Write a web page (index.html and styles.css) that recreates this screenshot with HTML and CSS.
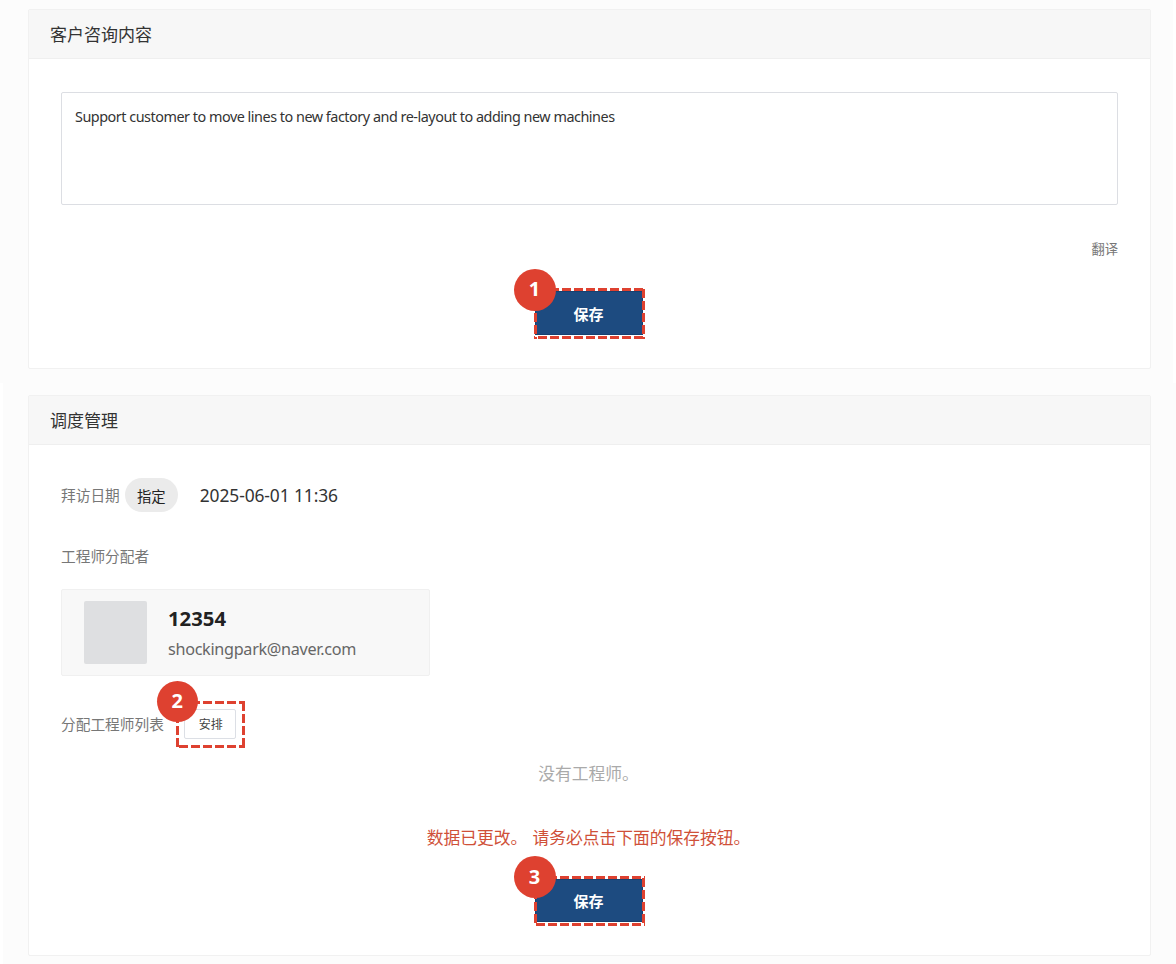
FILE: index.html
```html
<!DOCTYPE html>
<html lang="zh-CN">
<head>
<meta charset="utf-8">
<title>调度管理</title>
<link rel="stylesheet" href="styles.css">
</head>
<body>
<section class="band band-top">
  <article class="card card-inquiry">
    <h2 class="card-title">客户咨询内容</h2>
    <div class="card-body">
      <div class="inquiry-box"><span class="inquiry-text">Support customer to move lines to new factory and re-layout to adding new machines</span></div>
      <a class="translate">翻译</a>
      <div class="save-wrap">
        <button class="save">保存</button>
        <svg class="dash" width="111" height="51"><path d="M0 1.5H111M0 49.5H111" stroke-dashoffset="-4"/><path d="M1.5 0V51M109.5 0V51" stroke-dashoffset="-1"/></svg>
        <span class="step">1</span>
      </div>
    </div>
  </article>
</section>
<section class="band band-bottom">
  <article class="card card-dispatch">
    <h2 class="card-title">调度管理</h2>
    <div class="card-body">
      <div class="visit-row">
        <span class="label">拜访日期</span>
        <button class="pill">指定</button>
        <span class="date">2025-06-01 11:36</span>
      </div>
      <div class="label assigner-label">工程师分配者</div>
      <div class="person">
        <div class="avatar"></div>
        <div class="person-info">
          <strong class="person-name">12354</strong>
          <span class="person-mail">shockingpark@naver.com</span>
        </div>
      </div>
      <div class="assign-row">
        <span class="label">分配工程师列表</span>
        <div class="assign-wrap">
          <button class="assign">安排</button>
          <svg class="dash dash-small" width="69" height="47"><path d="M0 1.5H69M0 45.5H69" stroke-dashoffset="-3"/><path d="M1.5 0V47M67.5 0V47" stroke-dashoffset="-1"/></svg>
          <span class="step step-small">2</span>
        </div>
      </div>
      <p class="empty">没有工程师。</p>
      <p class="warning">数据已更改。<span class="warning-next">请务必点击下面的保存按钮。</span></p>
      <div class="save-wrap save-final">
        <button class="save">保存</button>
        <svg class="dash" width="111" height="50"><path d="M0 1.5H111M0 48.5H111" stroke-dashoffset="-2"/><path d="M1.5 0V50M109.5 0V50" stroke-dashoffset="-2"/></svg>
        <span class="step">3</span>
      </div>
    </div>
  </article>
</section>
</body>
</html>
```
FILE: styles.css
```css
* { box-sizing: border-box; }

body {
  margin: 0;
  width: 1176px;
  height: 964px;
  overflow: hidden;
  background: #fff;
  color: #333;
  font-family: "Noto Sans", "Noto Sans CJK SC", sans-serif;
}

button { padding: 0; font-family: inherit; }

.band { background: #fcfcfc; }
.band-top { width: 1173px; height: 383px; padding: 9px 0 0 28px; }
.band-bottom { width: 1173px; height: 581px; margin-left: 3px; padding: 12px 0 0 25px; }

.card { width: 1123px; border: 1px solid #f1f1f1; border-radius: 2px; background: #fff; }
.card-inquiry { height: 360px; }
.card-dispatch { height: 561px; }

.card-title {
  height: 49px;
  margin: 0;
  padding-left: 21px;
  border-bottom: 1px solid #efefef;
  background: #f7f7f7;
  font-size: 17px;
  font-weight: 400;
  line-height: 49px;
}

.card-body { display: flex; flex-direction: column; padding: 33px 32px 0; }

.inquiry-box {
  height: 113px;
  padding: 10px 13px;
  border: 1px solid #dcdee3;
  border-radius: 2px;
  font-size: 14.4px;
  line-height: 28px;
  white-space: nowrap;
}
.inquiry-text { letter-spacing: -0.48px; }

.translate {
  align-self: flex-end;
  margin-top: 33px;
  color: #777;
  font-size: 13.3px;
  line-height: 22px;
}

.save-wrap { position: relative; align-self: center; margin: 31px 2px 0 0; width: 108px; height: 44px; }
.save {
  display: block;
  width: 108px;
  height: 44px;
  border: 1px solid #17406f;
  background: #1d4b80;
  color: #fff;
  font-size: 15px;
  font-weight: 700;
}

.dash { position: absolute; left: -1px; top: -3px; fill: none; stroke: #de4130; stroke-width: 3; stroke-dasharray: 9 3; }

.step {
  position: absolute;
  left: -21px;
  top: -22px;
  width: 42px;
  height: 42px;
  border-radius: 50%;
  background: #de4130;
  color: #fff;
  font-size: 20px;
  font-weight: 700;
  line-height: 40px;
  text-align: center;
}

.label { color: #777; font-size: 14.7px; line-height: 22px; white-space: nowrap; }

.visit-row { display: flex; align-items: center; height: 34px; }
.pill {
  width: 53px;
  height: 34px;
  margin: 0 22px 0 5px;
  border: 0;
  border-radius: 17px;
  background: #ebebeb;
  color: #222;
  font-size: 14.3px;
  font-weight: 400;
}
.date { font-size: 17.4px; letter-spacing: -0.1px; line-height: 34px; }

.assigner-label { margin-top: 33px; }

.person {
  display: flex;
  width: 369px;
  height: 87px;
  margin-top: 22px;
  padding: 11px 22px;
  gap: 21px;
  border: 1px solid #f0f0f0;
  border-radius: 2px;
  background: #f8f8f8;
}
.avatar { width: 63px; height: 63px; border-radius: 2px; background: #dedfe1; }
.person-info { display: flex; flex-direction: column; padding-top: 1px; }
.person-name { color: #222; font-size: 20.3px; line-height: 32px; }
.person-mail { color: #666; font-size: 16.2px; letter-spacing: -0.3px; line-height: 30px; }

.assign-row { display: flex; align-items: center; height: 30px; margin-top: 33px; }
.assign-wrap { position: relative; margin-left: 20px; }
.assign {
  display: block;
  width: 52px;
  height: 30px;
  padding-left: 2px;
  border: 1px solid #dcdfe5;
  border-radius: 2px;
  background: #fff;
  color: #444;
  font-size: 12px;
  font-weight: 400;
}
.dash-small { left: -8px; top: -8px; }
.step-small { left: -27px; top: -28px; width: 41px; height: 41px; }

.empty, .warning { margin: 0; font-size: 16.75px; line-height: 26px; white-space: nowrap; }
.empty { align-self: center; margin-top: 22px; margin-right: 2px; color: #aaa; }
.warning { align-self: center; margin-top: 38px; margin-right: 2px; color: #cf5038; }
.warning-next { margin-left: 5px; }
.save-final { margin-top: 28px; }
.save-final .save { height: 43px; }
.save-final .step { top: -23px; line-height: 41px; }
```
